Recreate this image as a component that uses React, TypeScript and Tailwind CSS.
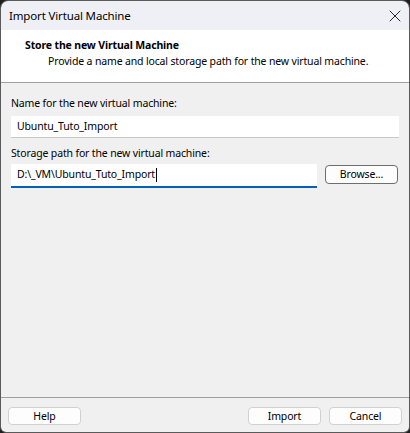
import * as React from "react";
import { X } from "lucide-react";

const font = { fontFamily: '"Noto Sans", "Segoe UI", sans-serif' };

type ButtonProps = {
  label: string;
};

const DialogButton = ({ label }: ButtonProps) => (
  <button className="h-[18px] w-[73px] rounded-[4px] border border-[#d1d1d1] bg-[#fdfdfd] text-[10.5px] leading-none tracking-[-0.15px] text-black">
    {label}
  </button>
);

export default function App() {
  return (
    <div className="h-[433px] w-[410px] overflow-hidden bg-[#1e1e1e]" style={font}>
      <div className="flex h-full flex-col overflow-hidden rounded-t-[8px] rounded-b-[6px] border border-[#5a5a5a] tracking-[-0.15px]">
        {/* title bar */}
        <div className="flex h-[29px] items-center justify-between bg-[#eff0f5] pl-[8px] pr-[4px]">
          <span className="text-[11.5px] text-black">Import Virtual Machine</span>
          <X className="h-[20px] w-[20px] text-black" strokeWidth={1} />
        </div>

        {/* header */}
        <div className="h-[53px] border-b border-[#a0a0a0] bg-white pt-[7px]">
          <div className="pl-[24px] text-[10.5px] font-bold leading-[16px] text-black">
            Store the new Virtual Machine
          </div>
          <div className="pl-[47px] text-[10.5px] leading-[16px] text-black">
            Provide a name and local storage path for the new virtual machine.
          </div>
        </div>

        {/* form */}
        <div className="flex flex-1 flex-col bg-[#f0f0f0] px-[10px] pt-[12px]">
          <label className="text-[10.5px] leading-[16px] text-black">Name for the new virtual machine:</label>
          <div className="mt-[5px] flex h-[22px] items-center border-b border-[#c8c8c8] bg-white pl-[6px] text-[10.5px] text-black">
            Ubuntu_Tuto_Import
          </div>

          <label className="mt-[7px] text-[10.5px] leading-[16px] text-black">
            Storage path for the new virtual machine:
          </label>
          <div className="mt-[3px] flex items-start gap-[8px]">
            <div className="flex h-[24px] w-[306px] items-center border-b-2 border-[#005fb8] bg-white pl-[6px] text-[10.5px] text-black">
              D:\_VM\Ubuntu_Tuto_Import
              <span className="ml-px h-[14px] w-px bg-black" />
            </div>
            <button className="mt-px h-[19px] w-[73px] rounded-[4px] border border-[#6e6e6e] bg-[#fdfdfd] text-[10.5px] leading-none text-black">
              Browse...
            </button>
          </div>
        </div>

        {/* footer */}
        <div className="flex h-[35px] items-start justify-between border-t border-[#a0a0a0] bg-[#f0f0f0] px-[7px] pt-[9px]">
          <DialogButton label="Help" />
          <div className="flex gap-[8px]">
            <DialogButton label="Import" />
            <DialogButton label="Cancel" />
          </div>
        </div>
      </div>
    </div>
  );
}
